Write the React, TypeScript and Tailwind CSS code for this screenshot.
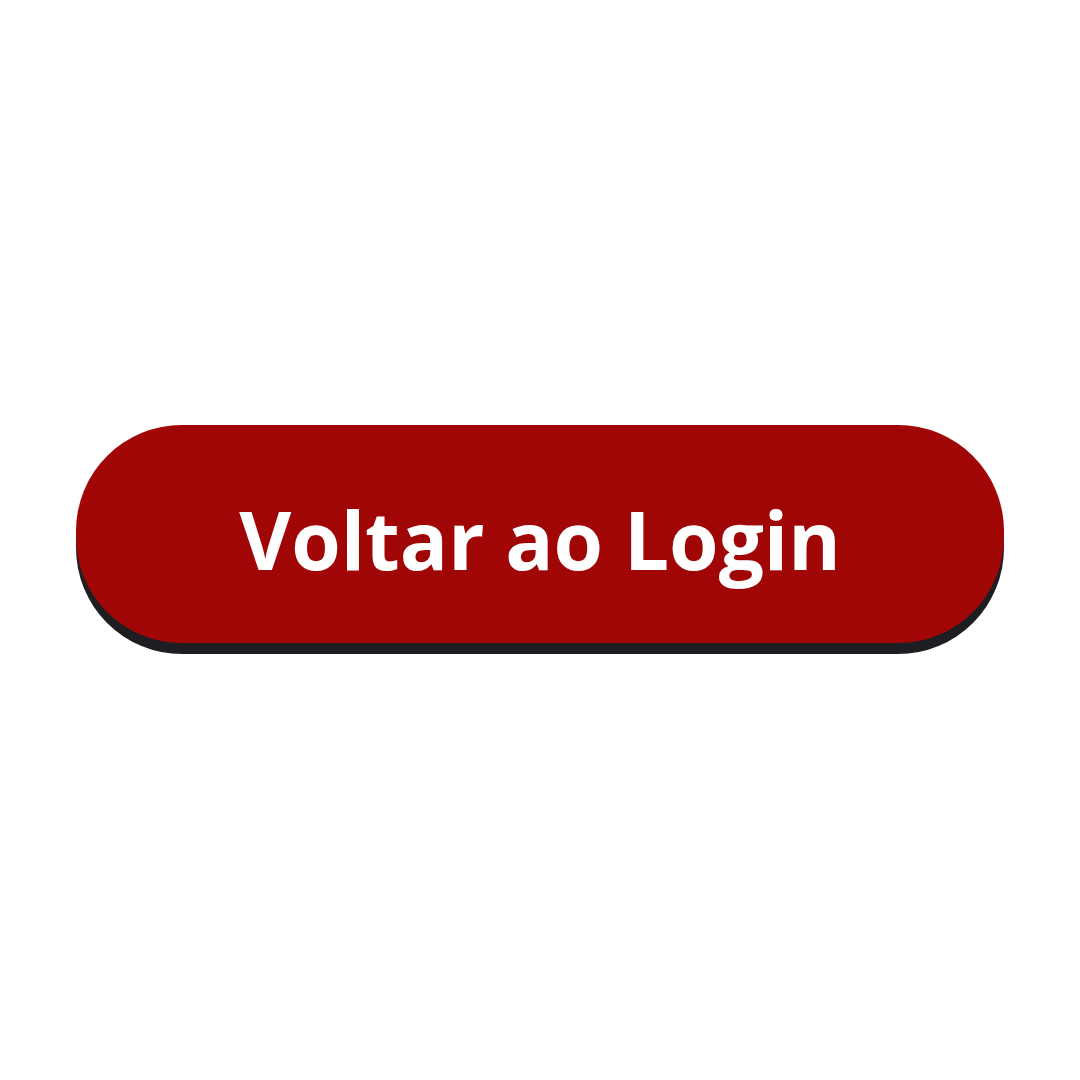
import React from 'react';

export default function App() {
  return (
    <div className="w-[1080px] h-[1080px] bg-white flex items-center justify-center">
      <button
        className="w-[928px] h-[218px] mb-[12px] rounded-[106px] bg-[#a10606] shadow-[0_11px_0_#1e1e22] flex items-center justify-center text-white font-bold text-[80px] tracking-[0px]"
        style={{ fontFamily: '"Open Sans", sans-serif' }}
      >
        <span className="mt-[10px]">Voltar ao Login</span>
      </button>
    </div>
  );
}
